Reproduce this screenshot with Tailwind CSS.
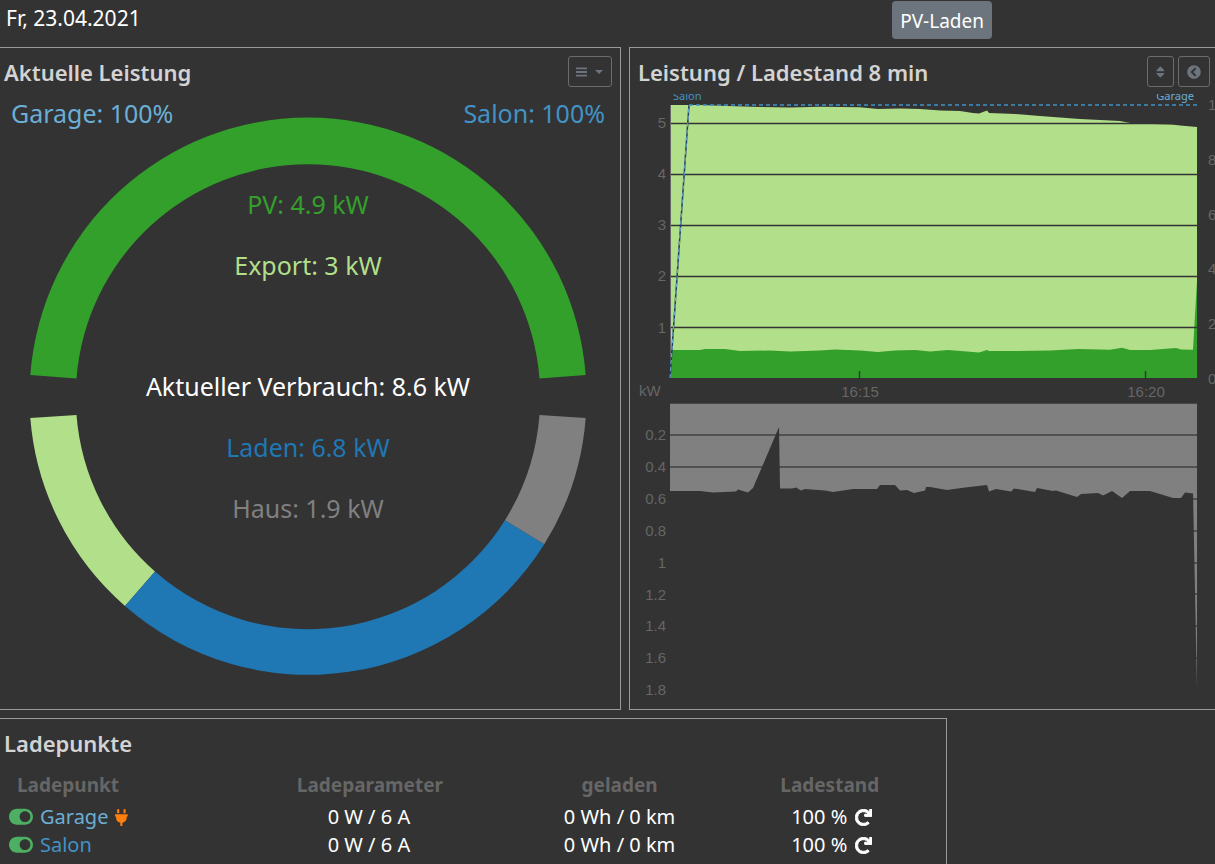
<!DOCTYPE html>
<html lang="de">
<head>
    <meta charset="UTF-8">
    <meta name="viewport" content="width=device-width, initial-scale=1.0">
    <title>Ladeübersicht</title>
    <script src="https://cdn.jsdelivr.net/npm/@tailwindcss/browser@4"></script>
</head>
<body class="bg-[#333333] text-white min-h-screen overflow-hidden font-['Noto_Sans',sans-serif]">
    <!-- Kopfzeile -->
    <header class="flex items-start justify-between h-[47px] pl-[6px] pr-[223px]">
        <time datetime="2021-04-23" class="text-[21px] leading-[36px]">Fr, 23.04.2021</time>
        <button type="button" class="mt-px h-[38px] px-2 rounded-[4px] bg-[#6c757d] text-[19px] leading-[40px]">PV-Laden</button>
    </header>

    <main>
        <div class="flex gap-2">
            <!-- Aktuelle Leistung -->
            <section class="flex-[621_1_0%] min-w-0 border-y border-r border-[#999999]">
                <div class="flex items-start justify-between h-[46px] pt-2 pl-1 pr-2">
                    <h2 class="text-[22px] leading-[32px] font-semibold text-[#d3d3d3]">Aktuelle Leistung</h2>
                    <button type="button" aria-label="Menü" class="flex items-center justify-center gap-2 w-11 h-[31px] rounded-[3px] border border-[#6c6c6c] text-[#6c757d]">
                        <svg class="w-[11px] h-3" viewBox="0 0 12 12" fill="none" stroke="currentColor" stroke-width="2"><path d="M0 2h12M0 6h12M0 10h12"/></svg>
                        <svg class="w-2 h-1" viewBox="0 0 8 4" fill="currentColor"><path d="M0 0h8L4 4z"/></svg>
                    </button>
                </div>
                <svg class="block w-full" viewBox="0 94 620 615" font-size="25" text-anchor="middle">
                    <path fill="#33a02c" d="M30.3 375A278.5 278.5 0 0 1 585.7 375L539.5 378.5A232.2 232.2 0 0 0 76.5 378.5Z"/>
                    <path fill="#b2df8a" d="M30.3 418A278.5 278.5 0 0 0 125 606L155 571.5A232.2 232.2 0 0 1 76.5 415Z"/>
                    <path fill="#1f78b4" d="M125 606A278.5 278.5 0 0 0 544.3 544.3L505 520.2A232.2 232.2 0 0 1 155 571.5Z"/>
                    <path fill="#808080" d="M544.3 544.3A278.5 278.5 0 0 0 585.7 418L539.5 415A232.2 232.2 0 0 1 505 520.2Z"/>
                    <text x="11" y="123" text-anchor="start" fill="#6baed6">Garage: 100%</text>
                    <text x="605" y="123" text-anchor="end" fill="#4292c6">Salon: 100%</text>
                    <text x="308" y="214" fill="#33a02c">PV: 4.9 kW</text>
                    <text x="308" y="275" fill="#b2df8a">Export: 3 kW</text>
                    <text x="308" y="396" fill="#ffffff">Aktueller Verbrauch: 8.6 kW</text>
                    <text x="308" y="457" fill="#1f78b4">Laden: 6.8 kW</text>
                    <text x="308" y="518" fill="#808080">Haus: 1.9 kW</text>
                </svg>
            </section>

            <!-- Leistung / Ladestand -->
            <section class="flex-[586_1_0%] min-w-0 border-y border-l border-[#999999]">
                <div class="flex items-start justify-between h-[46px] pt-2 pl-2 pr-[5px]">
                    <h2 class="text-[22px] leading-[32px] font-semibold text-[#d3d3d3]">Leistung / Ladestand 8 min</h2>
                    <div class="flex gap-1 text-[#6c757d]">
                        <button type="button" aria-label="Sortieren" class="flex items-center justify-center w-[27px] h-[31px] rounded-[3px] border border-[#6c6c6c]">
                            <svg class="h-[14px]" viewBox="0 0 320 512" fill="currentColor"><path d="M41 288h238c21.4 0 32.1 25.9 17 41L177 448c-9.4 9.4-24.6 9.4-33.9 0L24 329c-15.1-15.1-4.4-41 17-41zm255-105L177 64c-9.4-9.4-24.6-9.4-33.9 0L24 183c-15.1 15.1-4.4 41 17 41h238c21.4 0 32.1-25.9 17-41z"/></svg>
                        </button>
                        <button type="button" aria-label="Zurück" class="flex items-center justify-center w-8 h-[31px] rounded-[3px] border border-[#6c6c6c]">
                            <svg class="h-[14px]" viewBox="0 0 512 512" fill="currentColor"><path d="M256 504C119 504 8 393 8 256S119 8 256 8s248 111 248 248-111 248-248 248zM142.1 273l135.5 135.5c9.4 9.4 24.6 9.4 33.9 0l17-17c9.4-9.4 9.4-24.6 0-33.9L226.9 256l101.6-101.6c9.4-9.4 9.4-24.6 0-33.9l-17-17c-9.4-9.4-24.6-9.4-33.9 0L142.1 239c-9.4 9.4-9.4 24.6 0 34z"/></svg>
                        </button>
                    </div>
                </div>
                <svg class="block w-full font-['Liberation_Sans',Arial,sans-serif]" viewBox="630 94 585 615" font-size="15" fill="#666666">
                    <!-- Erzeugung -->
                    <path fill="#b2df8a" d="M670 105H700L727 106 760 107 790 107.5 820 106.7 860 107.3 878 109 900 108.5 920 109 940 110.5 960 111 973 113 979 113.5 987 110.5 989 113 1015 114 1040 116 1060 117.5 1080 119 1100 120 1120 121 1133 123.5 1172 124.5 1180 125.5 1197 127V378H670Z"/>
                    <path fill="#33a02c" d="M670 350H700L705 349H725L740 351 770 350.5 790 351.5 820 350.5 835 349.5 860 350.5 878 352 895 350.5 915 350 930 351.5 948 350 979 352.5 987 350 989 351 1015 351 1050 350.5 1078 349 1110 349.7 1122 347.7 1130 350H1150L1176 348 1181 349.5 1193 349.7 1197 280V378H670Z"/>
                    <path stroke="#333333" stroke-width="1.4" d="M670 123.5H1197M670 174.5H1197M670 225.5H1197M670 276.5H1197M670 327.5H1197M859.5 371V378M1145.5 371V378"/>
                    <path stroke="#666666" d="M670.5 105V378"/>
                    <!-- Ladestand -->
                    <path fill="none" stroke="#1f3d5c" stroke-width="1.5" d="M670 378L689 105"/>
                    <path fill="none" stroke="#6baed6" stroke-dasharray="4 3" d="M670 378L689 105"/>
                    <path fill="none" stroke="#4292c6" stroke-width="1.4" stroke-dasharray="4 3" d="M689 105H1197"/>
                    <g font-size="11" font-family="Noto Sans, sans-serif">
                        <text x="673" y="100" fill="#4292c6">Salon</text>
                        <text x="1194" y="100" fill="#6baed6" text-anchor="end">Garage</text>
                    </g>
                    <!-- Verbrauch -->
                    <path fill="#808080" d="M670 404H1197V690L1193 493.5 1185 492.5 1181 498H1173L1150 491H1130L1122 498 1112 491 1103 495.5 1098 493 1081 494 1077 497 1056 490.5 1053 491 1037 488 1035 492 1014 488.5 1011 491.5 996 489 989 491.5 987 485 965 487.5 947 490 930 487H926L925 490.5 914 493 907 490 900 490.5 895 485H880L877 489H853L833 492 825 490.5 805 489 801 490.5 796 487.5 792 488.5H780L779 427 753 488 748 492.5 738 489.5 736 491.5 713 492.5 700 491H670Z"/>
                    <path stroke="#484848" d="M670 403.5H1197"/>
                    <path stroke="#333333" stroke-opacity="0.8" stroke-width="1.4" d="M670 435H1197M670 467H1197M670 499H1197M670 531H1197M670 563H1197M670 594H1197M670 626H1197M670 658H1197"/>
                    <g text-anchor="end">
                        <text x="666" y="128">5</text>
                        <text x="666" y="179">4</text>
                        <text x="666" y="230">3</text>
                        <text x="666" y="281">2</text>
                        <text x="666" y="333">1</text>
                        <text x="666" y="440">0.2</text>
                        <text x="666" y="472">0.4</text>
                        <text x="666" y="504">0.6</text>
                        <text x="666" y="536">0.8</text>
                        <text x="666" y="568">1</text>
                        <text x="666" y="600">1.2</text>
                        <text x="666" y="631">1.4</text>
                        <text x="666" y="663">1.6</text>
                        <text x="666" y="695">1.8</text>
                    </g>
                    <text x="639" y="396">kW</text>
                    <text x="860" y="397" text-anchor="middle">16:15</text>
                    <text x="1146" y="397" text-anchor="middle">16:20</text>
                    <text x="1208" y="110">100</text>
                    <text x="1208" y="165">80</text>
                    <text x="1208" y="220">60</text>
                    <text x="1208" y="274">40</text>
                    <text x="1208" y="329">20</text>
                    <text x="1208" y="384">0</text>
                </svg>
            </section>
        </div>

        <!-- Ladepunkte -->
        <section class="mt-2 w-[947px] max-w-full border-t border-r border-[#999999] pb-8">
            <h2 class="pt-2 pl-1 text-[22px] leading-[32px] font-semibold text-[#d3d3d3]">Ladepunkte</h2>
            <table class="mt-2 w-full table-fixed text-center text-[20px] leading-[28px]">
                <colgroup>
                    <col class="w-[27%]">
                    <col class="w-[24%]">
                    <col class="w-[29%]">
                    <col class="w-[15%]">
                    <col>
                </colgroup>
                <thead>
                    <tr class="h-9 text-[19px] text-[#666666]">
                        <th class="pl-[17px] text-left">Ladepunkt</th>
                        <th class="pl-[2px]">Ladeparameter</th>
                        <th>geladen</th>
                        <th class="pl-1">Ladestand</th>
                        <td></td>
                    </tr>
                </thead>
                <tbody>
                    <tr>
                        <td>
                            <div class="flex items-center gap-[7px] pl-[9px] text-[#6baed6]">
                                <svg class="w-6 text-[#4daf62]" viewBox="0 0 576 512" fill="currentColor"><path d="M384 64H192C86 64 0 150 0 256s86 192 192 192h192c106 0 192-86 192-192S490 64 384 64zm0 320c-70.8 0-128-57.3-128-128 0-70.8 57.3-128 128-128 70.8 0 128 57.3 128 128 0 70.8-57.3 128-128 128z"/></svg>
                                <a href="#garage">Garage</a>
                                <svg class="h-[17px] text-[#ff7f0e]" viewBox="0 0 384 512" fill="currentColor"><path d="M320,32a32,32,0,0,0-64,0v96h64Zm48,128H16A16,16,0,0,0,0,176v32a16,16,0,0,0,16,16H32v32A160.07,160.07,0,0,0,160,412.8V512h64V412.8A160.07,160.07,0,0,0,352,256V224h16a16,16,0,0,0,16-16V176A16,16,0,0,0,368,160ZM128,32a32,32,0,0,0-64,0v96h64Z"/></svg>
                            </div>
                        </td>
                        <td>0 W / 6 A</td>
                        <td>0 Wh / 0 km</td>
                        <td>
                            <div class="flex items-center justify-center gap-2 pl-2">
                                <span>100 %</span>
                                <svg class="w-[17px]" viewBox="0 0 512 512" fill="currentColor" stroke="currentColor" stroke-width="28"><path d="M500.33 0h-47.41a12 12 0 0 0-12 12.57l4 82.76A247.42 247.42 0 0 0 256 8C119.34 8 7.9 119.53 8 256.19 8.1 393.07 119.1 504 256 504a247.1 247.1 0 0 0 166.18-63.91 12 12 0 0 0 .48-17.43l-34-34a12 12 0 0 0-16.38-.55A176 176 0 1 1 402.1 157.8l-101.53-4.87a12 12 0 0 0-12.57 12v47.41a12 12 0 0 0 12 12h200.33a12 12 0 0 0 12-12V12a12 12 0 0 0-12-12z"/></svg>
                            </div>
                        </td>
                        <td></td>
                    </tr>
                    <tr>
                        <td>
                            <div class="flex items-center gap-[7px] pl-[9px] text-[#4292c6]">
                                <svg class="w-6 text-[#4daf62]" viewBox="0 0 576 512" fill="currentColor"><path d="M384 64H192C86 64 0 150 0 256s86 192 192 192h192c106 0 192-86 192-192S490 64 384 64zm0 320c-70.8 0-128-57.3-128-128 0-70.8 57.3-128 128-128 70.8 0 128 57.3 128 128 0 70.8-57.3 128-128 128z"/></svg>
                                <a href="#salon">Salon</a>
                            </div>
                        </td>
                        <td>0 W / 6 A</td>
                        <td>0 Wh / 0 km</td>
                        <td>
                            <div class="flex items-center justify-center gap-2 pl-2">
                                <span>100 %</span>
                                <svg class="w-[17px]" viewBox="0 0 512 512" fill="currentColor" stroke="currentColor" stroke-width="28"><path d="M500.33 0h-47.41a12 12 0 0 0-12 12.57l4 82.76A247.42 247.42 0 0 0 256 8C119.34 8 7.9 119.53 8 256.19 8.1 393.07 119.1 504 256 504a247.1 247.1 0 0 0 166.18-63.91 12 12 0 0 0 .48-17.43l-34-34a12 12 0 0 0-16.38-.55A176 176 0 1 1 402.1 157.8l-101.53-4.87a12 12 0 0 0-12.57 12v47.41a12 12 0 0 0 12 12h200.33a12 12 0 0 0 12-12V12a12 12 0 0 0-12-12z"/></svg>
                            </div>
                        </td>
                        <td></td>
                    </tr>
                </tbody>
            </table>
        </section>
    </main>
</body>
</html>
